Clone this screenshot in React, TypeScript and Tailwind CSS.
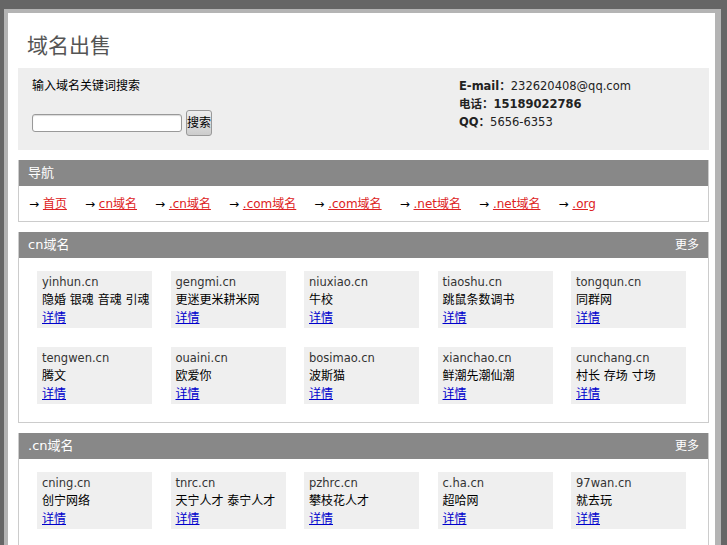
import React from 'react';

const font = { fontFamily: '"DejaVu Sans", "Noto Sans CJK SC", sans-serif' };

type Domain = { name: string; desc: string };

const cnDomains: Domain[] = [
  { name: 'yinhun.cn', desc: '隐婚 银魂 音魂 引魂' },
  { name: 'gengmi.cn', desc: '更迷更米耕米网' },
  { name: 'niuxiao.cn', desc: '牛校' },
  { name: 'tiaoshu.cn', desc: '跳鼠条数调书' },
  { name: 'tongqun.cn', desc: '同群网' },
  { name: 'tengwen.cn', desc: '腾文' },
  { name: 'ouaini.cn', desc: '欧爱你' },
  { name: 'bosimao.cn', desc: '波斯猫' },
  { name: 'xianchao.cn', desc: '鲜潮先潮仙潮' },
  { name: 'cunchang.cn', desc: '村长 存场 寸场' },
];

const dotCnDomains: Domain[] = [
  { name: 'cning.cn', desc: '创宁网络' },
  { name: 'tnrc.cn', desc: '天宁人才 泰宁人才' },
  { name: 'pzhrc.cn', desc: '攀枝花人才' },
  { name: 'c.ha.cn', desc: '超哈网' },
  { name: '97wan.cn', desc: '就去玩' },
];

const navLinks = ['首页', 'cn域名', '.cn域名', '.com域名', '.com域名', '.net域名', '.net域名', '.org'];

function DomainCard({ d }: { d: Domain }) {
  return (
    <div className="h-[57px] overflow-hidden bg-[#efefef] pl-[5px] pt-[2px] text-[11.5px]">
      <div className="h-[18px] whitespace-nowrap leading-[18px] text-[#333]">{d.name}</div>
      <div className="h-[18px] whitespace-nowrap text-[12px] leading-[18px] text-black">{d.desc}</div>
      <div className="h-[18px] leading-[18px]">
        <a href="#" className="text-[12px] text-[#0000cc] underline">
          详情
        </a>
      </div>
    </div>
  );
}

function Section({ title, domains }: { title: string; domains: Domain[] }) {
  return (
    <div className="mb-[10px] border border-t-0 border-[#ccc]">
      <div className="flex h-[26px] items-center justify-between bg-[#888] px-[9px] text-white">
        <span className="text-[13px]">{title}</span>
        <span className="text-[12px]">更多</span>
      </div>
      <div className="grid grid-cols-[repeat(5,115px)] gap-x-[18.5px] gap-y-[19px] pl-[18px] pt-[13px] pb-[18px]">
        {domains.map((d) => (
          <DomainCard key={d.name} d={d} />
        ))}
      </div>
    </div>
  );
}

export default function App() {
  return (
    <div className="min-h-[545px] bg-[#666] pt-[9px] pl-[4px]" style={font}>
      <div className="w-[717px] border-4 border-r-[6px] border-[#b4b4b4] bg-white pl-[10px] pr-[6px]">
        {/* 标题 */}
        <div className="h-[55px] pl-[9px] pt-[20px] text-[21px] leading-[26px] text-[#555]">域名出售</div>

        {/* 搜索与联系方式 */}
        <div className="mb-[10px] flex h-[82px] bg-[#eee]">
          <div className="w-[441px] pl-[14px] pt-[9px]">
            <div className="h-[18px] text-[12px] leading-[18px] text-black">输入域名关键词搜索</div>
            <div className="mt-[15px] flex h-[26px] items-center gap-[4px]">
              <input
                type="text"
                className="h-[18px] w-[150px] rounded-[3px] border border-[#999] bg-white shadow-[inset_0_1px_1px_rgba(0,0,0,0.15)]"
              />
              <button className="h-[26px] w-[26px] rounded-[3px] border border-[#999] bg-gradient-to-b from-[#eee] to-[#ccc] text-[12px] text-black">
                搜索
              </button>
            </div>
          </div>
          <div className="pt-[9px] text-[11.5px] leading-[18px] text-[#222]">
            <div className="h-[18px]">
              <b>E-mail：</b>232620408@qq.com
            </div>
            <div className="h-[18px]">
              <b>电话：15189022786</b>
            </div>
            <div className="h-[18px]">
              <b>QQ：</b>5656-6353
            </div>
          </div>
        </div>

        {/* 导航 */}
        <div className="mb-[10px] border border-t-0 border-[#ccc]">
          <div className="flex h-[26px] items-center bg-[#888] pl-[9px] text-[13px] text-white">导航</div>
          <div className="flex h-[35px] items-center pl-[10px] text-[12px] leading-[18px]">
            {navLinks.map((l, i) => (
              <span key={i} className="mr-[18px] text-black">
                →{' '}
                <a href="#" className="text-[#d22] underline">
                  {l}
                </a>
              </span>
            ))}
          </div>
        </div>

        <Section title="cn域名" domains={cnDomains} />
        <Section title=".cn域名" domains={dotCnDomains} />
      </div>
    </div>
  );
}
